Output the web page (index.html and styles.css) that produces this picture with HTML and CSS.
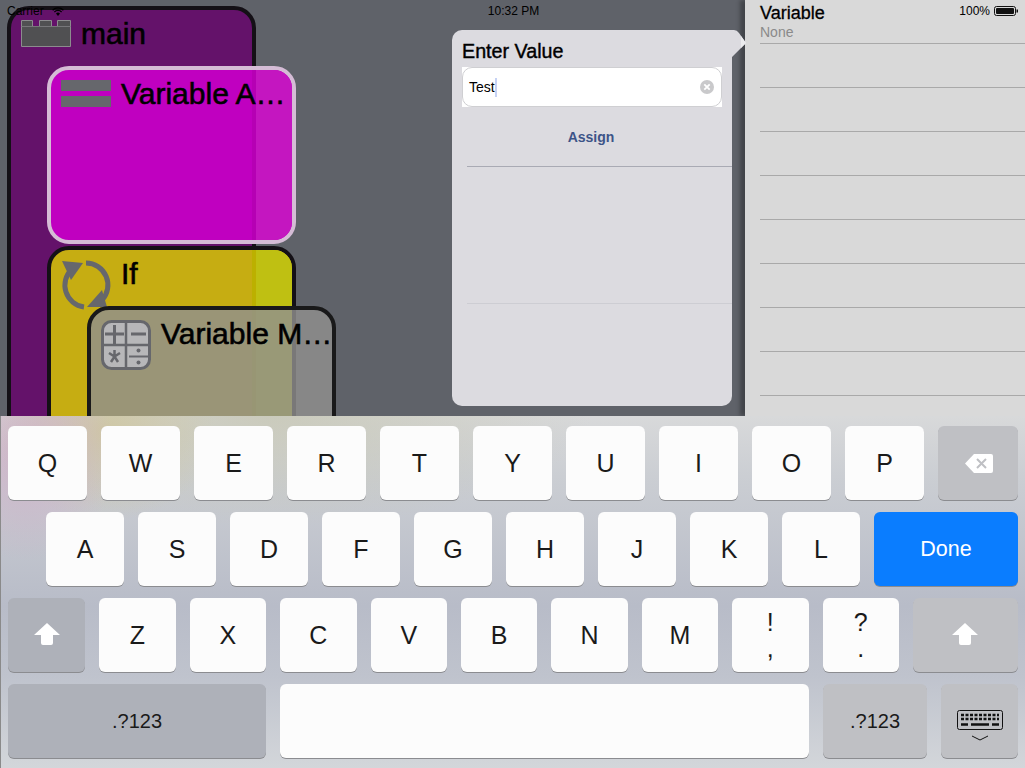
FILE: index.html
```html
<!DOCTYPE html>
<html lang="en">
<head>
  <meta charset="UTF-8">
  <title>Enter Value</title>
  <link rel="stylesheet" href="styles.css">
</head>
<body>
  <div class="top">
    <div class="canvas">
      <div class="block block-main">
        <svg class="icon icon-brick" width="50" height="27" viewBox="0 0 50 27">
          <path d="M.5 26.500V.5h11v6h7v-6h12v6h6v-6h13v26z" fill="#505052" stroke="#8c8c8e"/>
          <path d="M.5 6.500h49" stroke="#77777a"/>
        </svg>
        <div class="title">main</div>

        <div class="block block-assign">
          <svg class="icon icon-equals" width="50" height="27" viewBox="0 0 50 27">
            <rect width="50" height="11" fill="#66676c"/>
            <rect y="16" width="50" height="11" fill="#66676c"/>
          </svg>
          <div class="title">Variable A…</div>
        </div>

        <div class="block block-if">
          <svg class="icon icon-loop" width="52" height="52" viewBox="0 0 52 52">
            <path d="M12 11A22 22 0 0 0 24 49" fill="none" stroke="#66676c" stroke-width="5"/>
            <path d="M26 5A22 22 0 0 1 42 42" fill="none" stroke="#66676c" stroke-width="5"/>
            <path d="M2 3l21 2-12 17z" fill="#66676c"/>
            <path d="M42 32l5 17H27z" fill="#66676c"/>
          </svg>
          <div class="title">If</div>

          <div class="block block-math">
            <svg class="icon icon-math" width="50" height="50" viewBox="0 0 50 50">
              <rect x="1.500" y="1.500" width="47" height="47" rx="9" fill="#b7b7b9" stroke="#66676c" stroke-width="3"/>
              <path d="M25 2v46M2 25h46" stroke="#66676c" stroke-width="2.500"/>
              <path d="M4 14h19M13.500 5v19M30 14h15" stroke="#66676c" stroke-width="3"/>
              <path d="M13.500 30v6.500M8 33l5.500 3.500L19 33M10 42l3.500-5.500L17 42" fill="none" stroke="#66676c" stroke-width="2.500"/>
              <path d="M28 36.500h19" stroke="#66676c" stroke-width="2"/>
              <circle cx="37.500" cy="30.500" r="2" fill="#66676c"/>
              <circle cx="37.500" cy="42.500" r="2" fill="#66676c"/>
            </svg>
            <div class="title">Variable M…</div>
          </div>
        </div>
      </div>
    </div>

    <div class="panel">
      <div class="row row-head">
        <div class="row-title">Variable</div>
        <div class="row-sub">None</div>
      </div>
      <div class="row"></div>
      <div class="row"></div>
      <div class="row"></div>
      <div class="row"></div>
      <div class="row"></div>
      <div class="row"></div>
      <div class="row"></div>
      <div class="row"></div>
    </div>

    <div class="popover">
      <svg class="pop-arrow" width="16" height="30" viewBox="0 0 16 30">
        <path d="M0 0h2q3 0 5 3l7 10-3 3L0 27z" fill="#dcdbe0"/>
        <path d="M9 6l5 7-3 3-2 2z" fill="#ececee"/>
      </svg>
      <div class="pop-title">Enter Value</div>
      <div class="field-wrap">
        <div class="field">
          <span class="field-text">Test</span><span class="caret"></span>
          <svg class="clear" width="14" height="14" viewBox="0 0 14 14">
            <circle cx="7" cy="7" r="7" fill="#c9c9cb"/>
            <path d="M4.300 4.300l5.400 5.400M9.700 4.300l-5.400 5.400" stroke="#fff" stroke-width="1.800"/>
          </svg>
        </div>
      </div>
      <div class="pop-row pop-assign">Assign</div>
      <div class="pop-row pop-empty"></div>
    </div>

    <div class="status">
      <div class="status-left">
        <span>Carrier</span>
        <svg width="12" height="9" viewBox="0 0 12 9">
          <path d="M.6 3.200a7.600 7.600 0 0 1 10.800 0M2.400 5a5 5 0 0 1 7.200 0" fill="none" stroke="#000" stroke-width="1.300"/>
          <path d="M4 6.600a2.800 2.800 0 0 1 4 0L6 9z" fill="#000"/>
        </svg>
      </div>
      <div class="status-time">10:32 PM</div>
      <div class="status-right">
        <span>100%</span>
        <svg width="24" height="10" viewBox="0 0 24 10">
          <rect x=".5" y=".5" width="21" height="9" rx="2" fill="none" stroke="#111"/>
          <rect x="2" y="2" width="18" height="6" rx="1" fill="#111"/>
          <rect x="22.500" y="3.500" width="1.500" height="3" fill="#111"/>
        </svg>
      </div>
    </div>
  </div>

  <div class="keyboard">
    <div class="kb-row">
      <div class="key">Q</div>
      <div class="key">W</div>
      <div class="key">E</div>
      <div class="key">R</div>
      <div class="key">T</div>
      <div class="key">Y</div>
      <div class="key">U</div>
      <div class="key">I</div>
      <div class="key">O</div>
      <div class="key">P</div>
      <div class="key key-dark key-back">
        <svg width="28" height="19" viewBox="0 0 28 19">
          <path d="M9 0h17q2 0 2 2v15q0 2-2 2H9L0 9.500z" fill="#fff"/>
          <path d="M12 5l9 9M21 5l-9 9" stroke="#bfc0c4" stroke-width="2"/>
        </svg>
      </div>
    </div>
    <div class="kb-row kb-row-2">
      <div class="key">A</div>
      <div class="key">S</div>
      <div class="key">D</div>
      <div class="key">F</div>
      <div class="key">G</div>
      <div class="key">H</div>
      <div class="key">J</div>
      <div class="key">K</div>
      <div class="key">L</div>
      <div class="key key-done">Done</div>
    </div>
    <div class="kb-row">
      <div class="key key-dark key-shift key-cool">
        <svg width="26" height="22" viewBox="0 0 26 22">
          <path d="M13 0l13 12h-7v8q0 2-2 2H9q-2 0-2-2v-8H0z" fill="#fff"/>
        </svg>
      </div>
      <div class="key">Z</div>
      <div class="key">X</div>
      <div class="key">C</div>
      <div class="key">V</div>
      <div class="key">B</div>
      <div class="key">N</div>
      <div class="key">M</div>
      <div class="key key-stack"><span>!</span><span>,</span></div>
      <div class="key key-stack"><span>?</span><span>.</span></div>
      <div class="key key-dark key-shift-r">
        <svg width="26" height="22" viewBox="0 0 26 22">
          <path d="M13 0l13 12h-7v8q0 2-2 2H9q-2 0-2-2v-8H0z" fill="#fff"/>
        </svg>
      </div>
    </div>
    <div class="kb-row">
      <div class="key key-dark key-cool key-num-l">.?123</div>
      <div class="key key-space"></div>
      <div class="key key-dark key-num-r">.?123</div>
      <div class="key key-dark key-hide">
        <svg width="46" height="32" viewBox="0 0 46 32">
          <rect x=".5" y=".5" width="45" height="19" rx="2" fill="none" stroke="#111"/>
          <path d="M4 5h38M4 9h38" stroke="#111" stroke-width="2.500" stroke-dasharray="3 1.500"/>
          <path d="M4 14.500h7M14 14.500h18M35 14.500h7" stroke="#111" stroke-width="2.500"/>
          <path d="M15 26l8 4 8-4" fill="none" stroke="#111"/>
        </svg>
      </div>
    </div>
  </div>
</body>
</html>
```

FILE: styles.css
```css
* {
  margin: 0;
  padding: 0;
  box-sizing: border-box;
}
html, body {
  width: 100%;
  height: 100%;
}
body {
  font-family: "Liberation Sans", Arial, sans-serif;
  color: #000;
  background: #5f6269;
  overflow: hidden;
}

.top {
  position: relative;
  display: flex;
  height: 416px;
  overflow: hidden;
}

/* block canvas */
.canvas {
  position: relative;
  flex: 1;
  overflow: hidden;
}
.block {
  position: absolute;
  width: 249px;
  border: 4px solid #141016;
  border-radius: 22px;
}
.block-main {
  left: 7px;
  top: 6px;
  height: 600px;
  background: #64126a;
}
.block-assign {
  left: 36px;
  top: 56px;
  height: 178px;
  background: #c000c0;
  border-color: #d5bcd6;
}
.block-if {
  left: 36px;
  top: 236px;
  height: 400px;
  background: #c6ad12;
}
.block-math {
  left: 36px;
  top: 56px;
  height: 300px;
  background: rgba(144, 144, 142, .82);
  border-color: #19191a;
}
.block-assign::before,
.block-if::before {
  content: "";
  position: absolute;
  left: 201px;
  top: 0;
  right: 0;
  bottom: 0;
  border-left: 4px solid;
  border-radius: 0 18px 18px 0;
}
.block-assign::before {
  background: #c416c0;
  border-left-color: #b600b4;
}
.block-if::before {
  background: #bfc012;
  border-left-color: #bcb000;
}
.icon {
  position: absolute;
  left: 10px;
  top: 10px;
}
.block-if .icon-loop {
  top: 8px;
  left: 9px;
}
.title {
  position: relative;
  margin: 6px 0 0 70px;
  font-size: 30px;
  line-height: 36px;
  white-space: nowrap;
  -webkit-text-stroke: .6px #000;
}

/* right table */
.panel {
  width: 280px;
  padding-left: 15px;
  background: #d9d9d9;
  box-shadow: -5px 0 4px rgba(0, 0, 0, .3);
  position: relative;
}
.row {
  height: 44px;
  border-bottom: 1px solid #a9a9a9;
}
.row-title {
  font-size: 18px;
  line-height: 20px;
  padding-top: 3px;
  height: 24px;
  -webkit-text-stroke: .3px #000;
}
.row-sub {
  font-size: 14px;
  line-height: 16px;
  color: #8a8a8a;
}

/* popover */
.popover {
  position: absolute;
  left: 452px;
  top: 30px;
  width: 280px;
  height: 376px;
  padding: 9px 0 0 10px;
  background: #dcdbe0;
  border-radius: 10px 0 10px 10px;
}
.pop-arrow {
  position: absolute;
  left: 280px;
  top: 0;
}
.pop-title {
  font-size: 19.700px;
  line-height: 24px;
  -webkit-text-stroke: .4px #000;
}
.field-wrap {
  width: 260px;
  height: 40px;
  margin-top: 4px;
  background: #fff;
}
.field {
  display: flex;
  align-items: center;
  height: 100%;
  padding: 0 7px 0 6px;
  border: 1px solid #cfcfd2;
  border-radius: 10px;
  font-size: 14px;
}
.caret {
  width: 2px;
  height: 19px;
  background: #c6d2f4;
}
.clear {
  margin-left: auto;
}
.pop-row {
  margin-left: 5px;
  border-bottom: 1px solid #a9aab4;
}
.pop-assign {
  height: 60px;
  padding-right: 17px;
  font-size: 14px;
  font-weight: bold;
  line-height: 60px;
  text-align: center;
  color: #3c5488;
}
.pop-empty {
  height: 137px;
  border-bottom-color: #cdcdd3;
}

/* status bar */
.status {
  position: absolute;
  left: 0;
  top: 0;
  width: 100%;
  height: 22px;
  padding: 0 7px;
  display: flex;
  align-items: center;
  justify-content: space-between;
  font-size: 12px;
  color: #000;
}
.status-left, .status-right {
  display: flex;
  align-items: center;
  gap: 8px;
  width: 200px;
}
.status-right {
  justify-content: flex-end;
  gap: 4px;
}
.status-time {
  margin-left: 2px;
}

/* keyboard */
.keyboard {
  height: 352px;
  padding: 10px 7px 0 7px;
  display: flex;
  flex-direction: column;
  gap: 12px;
  border-left: 1px solid #8a8a8a;
  background:
    radial-gradient(ellipse 90px 105px at 25px 40px, rgba(206, 172, 198, .8), transparent),
    radial-gradient(ellipse 110px 90px at 105px 15px, rgba(206, 198, 160, .9), transparent),
    radial-gradient(ellipse 320px 110px at 270px 0, rgba(198, 198, 178, .75), transparent),
    linear-gradient(180deg, #d8d9da 0, #cbced3 60px, #b8bcc8 190px, #bfc3cd 260px, #d3d6da 352px);
}
.kb-row {
  display: flex;
  gap: 14px;
  height: 74px;
}
.kb-row-2 {
  padding-left: 38px;
}
.key {
  flex: 1;
  display: flex;
  align-items: center;
  justify-content: center;
  background: #fcfcfc;
  border-radius: 6px;
  box-shadow: 0 1px 0 #8b8c90;
  font-size: 25px;
  color: #1a1a1a;
}
.key-dark {
  background: #bfc0c4;
}
.key-cool {
  background: #aeb1b9;
}
.key-back {
  flex: 0 0 80px;
  padding-left: 2px;
}
.key-done {
  flex: 0 0 144px;
  padding-top: 1px;
  background: #0a7dff;
  color: #fff;
  font-size: 21.500px;
}
.key-shift {
  flex: 0 0 77.300px;
  padding-bottom: 3px;
}
.key-shift-r {
  flex: 0 0 105px;
  padding-bottom: 3px;
}
.key-stack {
  flex-direction: column;
  line-height: 26px;
}
.key-num-l {
  flex: 0 0 258px;
  padding-top: 1px;
  font-size: 20px;
}
.key-space {
  flex: 0 0 529px;
}
.key-num-r {
  flex: 0 0 104px;
  padding-top: 1px;
  font-size: 20px;
}
.key-hide {
  flex: 0 0 77px;
  padding-top: 10px;
}
```
